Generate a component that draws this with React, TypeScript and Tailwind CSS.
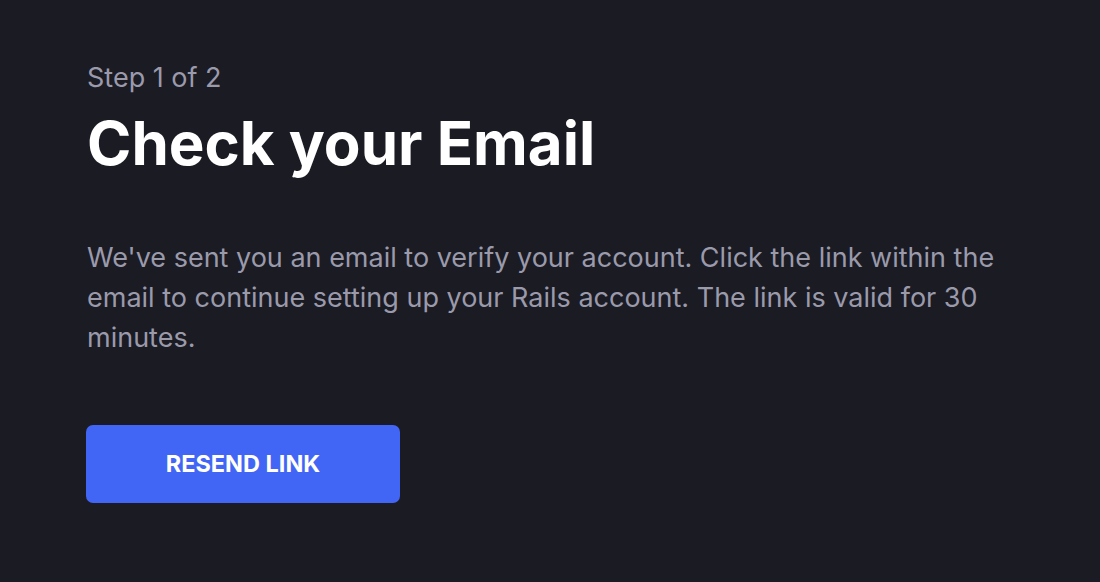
export default function App() {
  return (
    <div
      className="min-h-[582px] w-full bg-[#1b1b24] px-[87px] pt-[62px]"
      style={{ fontFamily: "Inter, 'Noto Sans', sans-serif" }}
    >
      <div className="max-w-[930px]">
        <p className="text-[27px] leading-[32px] text-[#9a9aab]">Step 1 of 2</p>
        <h1 className="mt-[13px] text-[60px] font-bold leading-[72px] text-white">
          Check your Email
        </h1>
        <p className="mt-[59px] text-[27px] leading-[40px] text-[#9a9aab]">
          We've sent you an email to verify your account. Click the link within the email to continue setting up your Rails account. The link is valid for 30 minutes.
        </p>
        <button className="-ml-px mt-[67px] flex h-[78px] w-[314px] items-center justify-center rounded-[7px] bg-[#4166f5] text-[23.5px] font-bold text-white">
          RESEND LINK
        </button>
      </div>
    </div>
  );
}
